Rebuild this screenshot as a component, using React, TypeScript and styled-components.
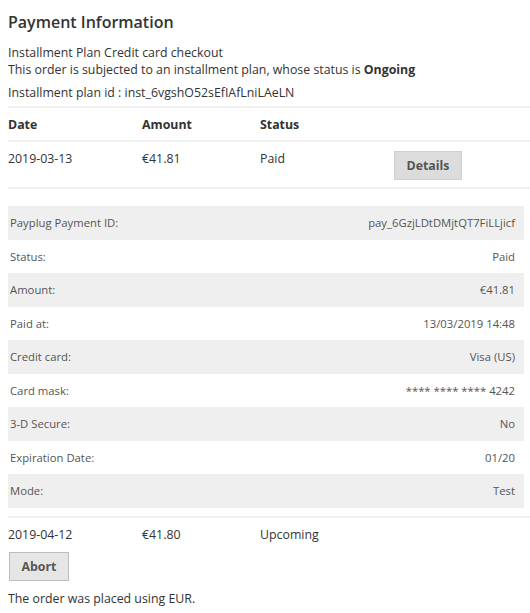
import React from "react";
import styled, { createGlobalStyle } from "styled-components";

const GlobalStyle = createGlobalStyle`
  body {
    margin: 0;
    background: #fff;
    font-family: "Open Sans", "DejaVu Sans", sans-serif;
    color: #333;
  }
`;

const Page = styled.div`
  padding: 8px 0 0 8px;
`;

const Title = styled.h2`
  margin: 3px 0 11px;
  font-size: 16px;
  font-weight: 600;
  line-height: 22px;
  color: #333;
`;

const Text = styled.p`
  margin: 0;
  font-size: 12.35px;
  line-height: 17px;
`;

const PlanId = styled(Text)`
  margin-top: 6px;
`;

const Table = styled.div`
  margin-top: 5px;
  border-top: 2px solid #f0f0f0;
`;

const Row = styled.div<{ $head?: boolean }>`
  display: grid;
  grid-template-columns: 134px 118px 134px 1fr;
  align-items: start;
  font-size: 12.35px;
  line-height: 17px;
  font-weight: ${(p) => (p.$head ? 700 : 400)};
  padding: 8px 0 7px;
  border-bottom: 2px solid #f0f0f0;
`;

const Cell = styled.div``;

const Button = styled.button<{ $dark?: boolean }>`
  font-family: "Open Sans", "DejaVu Sans", sans-serif;
  font-size: 12.35px;
  font-weight: 700;
  color: #555;
  background: ${(p) => (p.$dark ? "#dcdcdc" : "#e6e6e6")};
  border: 1px solid ${(p) => (p.$dark ? "#cfcfcf" : "#bdbdbd")};
  padding: 0;
  height: 29px;
  cursor: pointer;
`;

const DetailsButton = styled(Button)`
  width: 68px;
  margin: 1px 0 0 0;
`;

const AbortButton = styled(Button)`
  width: 60px;
  margin: 9px 0 0 1px;
`;

const Panel = styled.div`
  padding: 17px 6px 8px 0;
  border-bottom: 2px solid #f0f0f0;
`;

const DetailRow = styled.div<{ $shaded: boolean }>`
  display: flex;
  justify-content: space-between;
  align-items: center;
  height: 33.5px;
  padding: 0 9px 0 2px;
  background: ${(p) => (p.$shaded ? "#efefef" : "#fff")};
  font-size: 11.3px;
  color: #555;
`;

const LastRow = styled.div`
  padding: 8px 0 0;
  font-size: 12.35px;
  line-height: 17px;
`;

const Cols = styled.div`
  display: grid;
  grid-template-columns: 134px 118px 134px 1fr;
`;

const Footer = styled(Text)`
  margin-top: 9px;
`;

const details: [string, string][] = [
  ["Payplug Payment ID:", "pay_6GzjLDtDMjtQT7FiLLjicf"],
  ["Status:", "Paid"],
  ["Amount:", "€41.81"],
  ["Paid at:", "13/03/2019 14:48"],
  ["Credit card:", "Visa (US)"],
  ["Card mask:", "**** **** **** 4242"],
  ["3-D Secure:", "No"],
  ["Expiration Date:", "01/20"],
  ["Mode:", "Test"],
];

export default function App() {
  return (
    <>
      <GlobalStyle />
      <Page>
        <Title>Payment Information</Title>
        <Text>Installment Plan Credit card checkout</Text>
        <Text>
          This order is subjected to an installment plan, whose status is <b>Ongoing</b>
        </Text>
        <PlanId>Installment plan id : inst_6vgshO52sEfIAfLniLAeLN</PlanId>
        <Table>
          <Row $head>
            <Cell>Date</Cell>
            <Cell>Amount</Cell>
            <Cell>Status</Cell>
            <Cell />
          </Row>
          <Row>
            <Cell>2019-03-13</Cell>
            <Cell>€41.81</Cell>
            <Cell>Paid</Cell>
            <Cell>
              <DetailsButton $dark>Details</DetailsButton>
            </Cell>
          </Row>
          <Panel>
            {details.map(([label, value], i) => (
              <DetailRow key={label} $shaded={i % 2 === 0}>
                <span>{label}</span>
                <span>{value}</span>
              </DetailRow>
            ))}
          </Panel>
          <LastRow>
            <Cols>
              <Cell>2019-04-12</Cell>
              <Cell>€41.80</Cell>
              <Cell>Upcoming</Cell>
            </Cols>
            <AbortButton>Abort</AbortButton>
          </LastRow>
        </Table>
        <Footer>The order was placed using EUR.</Footer>
      </Page>
    </>
  );
}
